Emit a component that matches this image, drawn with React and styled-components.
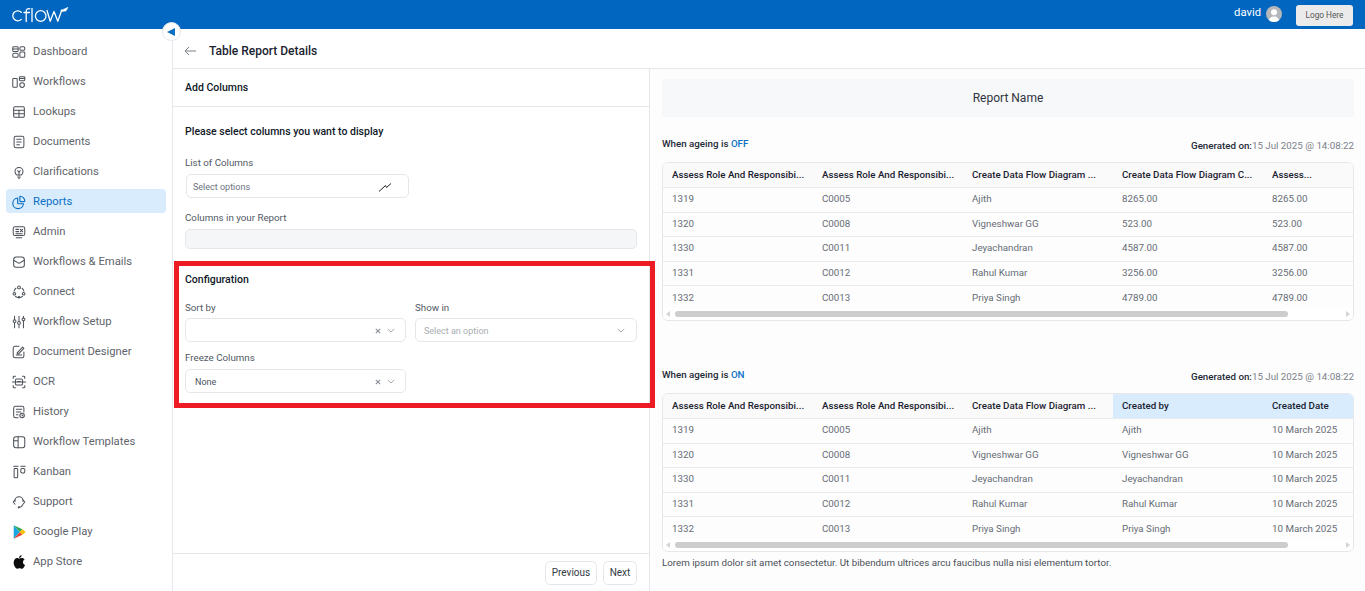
import React from 'react';
import styled, { createGlobalStyle } from 'styled-components';

const Global = createGlobalStyle`
  html, body { margin: 0; padding: 0; height: 100%; background: #fff; overflow: hidden; }
  body { font-family: Roboto, "Liberation Sans", sans-serif; color: #111827; }
  * { box-sizing: border-box; }
`;

const Page = styled.div`
  width: 1365px; height: 591px; display: flex; flex-direction: column; overflow: hidden; position: relative;
`;
const Header = styled.header`
  height: 29px; flex: none; background: #0066bf; display: flex; align-items: center; justify-content: space-between;
  padding: 0 12px 0 12px;
`;
const HeaderRight = styled.div`display: flex; align-items: center;`;
const UserName = styled.span`color: #fff; font-size: 11.25px; margin-right: 5px; margin-bottom: 4px;`;
const Avatar = styled.span`
  width: 16px; height: 16px; border-radius: 50%; background: #b4b7bb; display: flex; overflow: hidden; margin-right: 14px; margin-bottom: 1px;
`;
const LogoBtn = styled.button`
  width: 57px; height: 21px; border: 0; border-radius: 3px; background: #ebebeb; color: #555; font: 400 8.25px Roboto, sans-serif; padding: 0; margin-top: 1px;
`;
const Body = styled.div`flex: 1; display: flex; min-height: 0;`;
const Sidebar = styled.nav`
  width: 173px; flex: none; border-right: 1px solid #e5e7eb; padding: 10px 6px 0; display: flex; flex-direction: column; gap: 6px;
`;
const NavItem = styled.div`
  height: 24px; width: 160px; display: flex; align-items: center; gap: 6px; padding: 1px 0 0 5px; border-radius: 4px;
  background: ${p => (p.$active ? '#d8ecfd' : 'transparent')};
  color: ${p => (p.$active ? '#0b6fc4' : '#5f646b')};
  font-size: 11.25px;
  svg { flex: none; }
`;
const Collapse = styled.button`
  position: absolute; left: 162px; top: 22px; width: 19px; height: 19px; border-radius: 50%; border: 1px solid #e3e8ee; background: #fff;
  padding: 0; display: flex; align-items: center; justify-content: center;
`;
const Tri = styled.span`
  width: 0; height: 0; border-style: solid; border-width: 4.5px 8px 4.5px 0; border-color: transparent #0b6fc4 transparent transparent; margin-left: -1px;
`;
const Main = styled.main`flex: 1; display: flex; flex-direction: column; min-width: 0;`;
const TitleBar = styled.div`
  height: 40px; flex: none; border-bottom: 1px solid #e5e7eb; display: flex; align-items: center; padding: 5px 0 0 11px; gap: 13px;
`;
const Title = styled.h1`margin: 0; font-size: 12px; font-weight: 500; color: #1a2230;`;
const Split = styled.div`flex: 1; display: flex; min-height: 0;`;
const LeftPane = styled.section`
  width: 477px; flex: none; border-right: 1px solid #e5e7eb; display: flex; flex-direction: column;
`;
const PaneHead = styled.div`
  height: 38px; flex: none; border-bottom: 1px solid #e5e7eb; padding: 0 12px; display: flex; align-items: center;
  font-size: 10.5px; font-weight: 500; color: #101828;
`;
const PaneBody = styled.div`flex: 1; padding: 18px 12px 0; display: flex; flex-direction: column;`;
const Heading = styled.h2`margin: 0; font-size: 10.5px; line-height: 14px; font-weight: 500; color: #101828;`;
const Label = styled.label`display: block; font-size: 9.75px; line-height: 13px; color: #515863; margin-bottom: ${p => p.$mb}px; margin-top: ${p => p.$mt ?? 0}px;`;
const SelectBox = styled.div`
  height: 24px; width: ${p => p.$w || '100%'}; margin-left: ${p => p.$ml || 0}px; border: 1px solid #e5e7eb; border-radius: 5px; background: #fff; display: flex; align-items: center;
  padding: 1px ${p => p.$pr ?? 9}px 0 ${p => p.$pl ?? 9}px; font-size: 9px; color: ${p => p.$color || '#6b7280'};
`;
const SelectText = styled.span`flex: 1;`;
const EmptyBox = styled.div`height: 20px; border: 1px solid #e5e7eb; border-radius: 5px; background: #f5f6f8;`;
const Config = styled.div`position: relative; margin-top: 24px;`;
const Outline = styled.div`
  position: absolute; left: -11px; top: -12px; width: 481px; height: 147px; border: 5px solid #ed1c24; pointer-events: none;
`;
const TwoCols = styled.div`display: grid; grid-template-columns: 221px 222px; column-gap: 9px; margin-top: ${p => p.$mt}px;`;
const Field = styled.div``;
const Actions = styled.span`display: flex; align-items: center; gap: 6px;`;
const Footer = styled.div`
  height: 38px; flex: none; border-top: 1px solid #e5e7eb; display: flex; justify-content: flex-end; align-items: center; gap: 6px; padding: 0 12px 0 0;
`;
const Btn = styled.button`
  height: 24px; width: ${p => p.$w}px; border: 1px solid #e5e7eb; border-radius: 5px; background: #fff; color: #333a45;
  font: 400 10px Roboto, sans-serif; padding: 0;
`;
const RightPane = styled.section`flex: 1; min-width: 0; background: #fdfdfd; padding: 10px 11px 0 12px; display: flex; flex-direction: column;`;
const ReportName = styled.div`
  height: 38px; flex: none; background: #f7f8fa; display: flex; align-items: center; justify-content: center; font-size: 12px; color: #2f3540;
`;
const MetaRow = styled.div`
  display: flex; justify-content: space-between; align-items: center; height: 14px; margin-top: ${p => p.$mt}px; font-size: 9.75px; margin-bottom: 11px;
`;
const Ageing = styled.span`font-weight: 500; color: #1f2937; margin-top: -2px;`;
const Blue = styled.span`color: #0b6fc4;`;
const Gen = styled.span`color: #7a8089; margin-top: 2px;`;
const GenLabel = styled.b`font-weight: 500; color: #1f2937;`;
const TableWrap = styled.div`
  width: 692px; height: 159px; flex: none; border: 1px solid #e5e7eb; border-radius: 6px; overflow: hidden; display: flex; flex-direction: column;
`;
const Grid = styled.div`
  flex: 1; overflow: hidden; display: grid; grid-template-columns: repeat(5, 150px); grid-auto-rows: min-content;
`;
const Th = styled.div`
  height: 25px; padding: 0 9px 1px; display: flex; align-items: center; font-size: 9.75px; font-weight: 500; color: #1a2230; white-space: nowrap;
  background: ${p => (p.$hl ? '#d8ecfd' : '#fafafa')}; border-bottom: 1px solid #e8eaed;
`;
const Td = styled.div`
  height: ${p => p.$h}px; padding: 0 9px ${p => (p.$last ? 0 : 3)}px; display: flex; align-items: center; font-size: 9.75px; color: #666c75; white-space: nowrap;
  border-bottom: ${p => (p.$last ? 'none' : '1px solid #e8eaed')};
`;
const Scroll = styled.div`height: 12px; flex: none; display: flex; align-items: center; padding: 0 3px; gap: 5px; background: #fff;`;
const Arrow = styled.span`
  width: 0; height: 0; border-style: solid; flex: none;
  border-width: 3px ${p => (p.$right ? 0 : '4px')} 3px ${p => (p.$right ? '4px' : 0)};
  border-color: transparent ${p => (p.$right ? 'transparent' : '#d4d4d4')} transparent ${p => (p.$right ? '#d4d4d4' : 'transparent')};
`;
const Track = styled.div`flex: 1; height: 6px;`;
const Thumb = styled.div`width: 92%; height: 6px; border-radius: 3px; background: #cdcdcd;`;
const Note = styled.p`margin: 4px 0 0; font-size: 9.75px; line-height: 13px; color: #4a4f57;`;

const I = ({ children, c = '#4b5058', sw = 1.15 }) => (
  <svg width="16" height="16" viewBox="0 0 18 18" fill="none" stroke={c} strokeWidth={sw} strokeLinecap="round" strokeLinejoin="round">{children}</svg>
);

const icons = {
  Dashboard: <I><rect x="2" y="3" width="6" height="5.5" rx="1"/><rect x="10" y="3" width="5.5" height="4" rx="1.5"/><rect x="2" y="10.5" width="6" height="4.5" rx="1.5"/><rect x="10" y="9" width="5.5" height="6" rx="1"/><path d="M2 5.5h6"/></I>,
  Workflows: <I><rect x="2" y="5" width="5" height="10" rx="1"/><rect x="9.5" y="3" width="6" height="4.5" rx="1"/><path d="M9.5 5h6"/><circle cx="12.5" cy="12.5" r="2.6"/></I>,
  Lookups: <I><rect x="3" y="3" width="12" height="12" rx="1.5"/><path d="M3 7h12M3 11h12M9 7v8"/></I>,
  Documents: <I><rect x="3.5" y="2.5" width="11" height="13" rx="2"/><path d="M6.5 6h5M6.5 9h5M6.5 12h3"/></I>,
  Clarifications: <I><path d="M6.5 12.5C5 11.5 4.5 10 4.5 8.5a4.5 4.5 0 0 1 9 0c0 1.5-.5 3-2 4z"/><path d="M7.5 14.5h3M8.5 16h1M7.5 7.5L9 9.5l1.5-2M9 9.5v3"/></I>,
  Reports: <I c="#0b6fc4" sw={1.3}><path d="M7.5 4.5a6 6 0 1 0 6.5 6.5H8a.5.5 0 0 1-.5-.5z"/><path d="M10 2.5a5.5 5.5 0 0 1 5.5 5.5 .5.5 0 0 1-.5.5H10.5a.5.5 0 0 1-.5-.5z"/></I>,
  Admin: <I><rect x="2.5" y="3" width="13" height="10" rx="2"/><path d="M6 15.5h6M5.5 6h3M5.5 8.5h3M5.5 11h7M10.5 8.5l2.5-2.5M10.5 6l2.5 2.5" strokeWidth="1.3"/></I>,
  'Workflows & Emails': <I><path d="M3 6.5c0-2 1-3 3-3h6c2 0 3 1 3 3v6c0 1.5-1 2.5-2.5 2.5h-7C4 15 3 14 3 12.5z"/><path d="M3 7l6 3.500L15 7"/></I>,
  Connect: <I><circle cx="9" cy="3.8" r="1.6"/><circle cx="3.8" cy="11" r="1.5"/><circle cx="14.2" cy="11" r="1.5"/><circle cx="9" cy="14.8" r=".8"/><path d="M5.5 4.8C4.5 5.5 4 6.5 3.5 8M12.5 4.8c1 .7 1.5 1.7 2 3.2M5 14c.8.7 1.5 1 2.5 1.2M13 14c-.8.7-1.5 1-2.5 1.2"/></I>,
  'Workflow Setup': <I><path d="M4 2.5v4M4 10v5.5M9 2.5v6M9 12v3.5M14 2.5v2M14 8v7.500"/><circle cx="4" cy="8" r="1.6"/><circle cx="9" cy="10" r="1.6"/><circle cx="14" cy="6" r="1.6"/></I>,
  'Document Designer': <I><path d="M14.5 9v4.500a2 2 0 0 1-2 2h-8a2 2 0 0 1-2-2v-9a2 2 0 0 1 2-2H9"/><path d="M6 12.5h6M7 10l6-6.500 1.500 1.500-6 6H7z"/></I>,
  OCR: <I><path d="M2.5 5V3.500a1 1 0 0 1 1-1H5M13 2.500h1.500a1 1 0 0 1 1 1V5M2.5 13v1.500a1 1 0 0 0 1 1H5M13 15.500h1.500a1 1 0 0 0 1-1V13M1.5 9h15"/><rect x="5" y="5.5" width="8" height="7" rx="1.5"/><path d="M7.5 8.5h3"/></I>,
  History: <I><path d="M8 15.5H5a2 2 0 0 1-2-2v-9a2 2 0 0 1 2-2h7.500a2 2 0 0 1 2 2V9"/><path d="M6 6h6M6 9h5M6 12h2"/><circle cx="12.5" cy="13" r="2.5"/><path d="M12.5 12v1.200h1"/></I>,
  'Workflow Templates': <I><rect x="3" y="3" width="12.5" height="12.5" rx="2.5"/><path d="M3 7.5h5M8 3v12.500"/></I>,
  Kanban: <I><path d="M3 2.5h5M11 2.5h5"/><rect x="3.5" y="5" width="4" height="10.5" rx="1"/><rect x="11" y="5" width="4.5" height="5" rx="1.5"/></I>,
  Support: <I><path d="M4.5 8.5V7.500a4.500 4.500 0 0 1 9 0v1"/><path d="M4.5 6.5L2.500 9l2 2.500M13.5 6.5l2 2.500-2 2.500"/><path d="M13 12c-.5 2-2 3-3.500 3"/><circle cx="8.8" cy="15" r=".7"/></I>,
  'Google Play': (
    <svg width="16" height="16" viewBox="0 0 18 18">
      <path d="M3 1.5v15L10 9z" fill="#1aa6e0"/>
      <path d="M3 1.5L10 9l2.800-3z" fill="#34a853"/>
      <path d="M3 16.5L10 9l2.800 3z" fill="#ea4335"/>
      <path d="M12.8 6L10 9l2.800 3 3.700-3z" fill="#fbbc04"/>
    </svg>
  ),
  'App Store': (
    <svg width="16" height="16" viewBox="0 0 18 18" fill="#0c0c0c">
      <path d="M9.2 5.2c.8 0 1.8-.8 3-.8 1.2 0 2.4.6 3.100 1.700-2.600 1.500-2.200 5.100.5 6.200-.7 1.900-2.100 4.200-3.500 4.200-1 0-1.500-.6-2.700-.6-1.200 0-1.800.6-2.700.6C5.200 16.500 3 12.800 3 9.900c0-3 2-5.300 4-5.300 1 0 1.500.6 2.200.6z"/>
      <path d="M9 4.4c0-1.500 1.200-3 3-3.300.1 1.700-1.300 3.300-3 3.300z"/>
    </svg>
  ),
};

const navItems = Object.keys(icons);

const Logo = () => (
  <svg width="58" height="19" viewBox="0 0 58 19" fill="none" stroke="#fff" strokeWidth="1.3" strokeLinecap="round" strokeLinejoin="round">
    <path d="M9.3 7.2A5 5 0 1 0 9.300 14.400"/>
    <path d="M17.8 3.800c-2-.6-3.600 0-3.600 3V16.500M12 7.500h5.500"/>
    <path d="M20 3.500V16.500"/>
    <circle cx="28.700" cy="11" r="5.300"/>
    <path d="M35 5.500l3.200 10.800 3.800-9.800 3.800 9.800 4-11.300"/>
    <path d="M49 5.500L56 2.300L54 6L50 6.500z" fill="#fff" strokeWidth=".5"/>
  </svg>
);

const Cross = () => (
  <svg width="6" height="6" viewBox="0 0 6 6" stroke="#8b9098" strokeWidth="1.1"><path d="M.8.8l4.400 4.400M5.200.8L.8 5.200"/></svg>
);
const Chev = () => (
  <svg width="8" height="5" viewBox="0 0 8 5" fill="none" stroke="#a4a8ae" strokeWidth="1"><path d="M.8 1l3.200 3 3.200-3"/></svg>
);

const rows = [
  ['1319', 'C0005', 'Ajith', '8265.00'],
  ['1320', 'C0008', 'Vigneshwar GG', '523.00'],
  ['1330', 'C0011', 'Jeyachandran', '4587.00'],
  ['1331', 'C0012', 'Rahul Kumar', '3256.00'],
  ['1332', 'C0013', 'Priya Singh', '4789.00'],
];
const heights = [25, 24, 25, 24, 22];

const ReportTable = ({ heads, hl, cell }) => (
  <TableWrap>
    <Grid>
      {heads.map((h, i) => <Th key={i} $hl={hl && i >= 3}>{h}</Th>)}
      {rows.map((r, ri) => [0, 1, 2, 3, 4].map(ci => (
        <Td key={`${ri}-${ci}`} $h={heights[ri]} $last={ri === 4}>{cell(r, ci)}</Td>
      )))}
    </Grid>
    <Scroll>
      <Arrow />
      <Track><Thumb /></Track>
      <Arrow $right />
    </Scroll>
  </TableWrap>
);

const base = ['Assess Role And Responsibi...', 'Assess Role And Responsibi...', 'Create Data Flow Diagram ...'];

export default function App() {
  return (
    <Page>
      <Global />
      <Header>
        <Logo />
        <HeaderRight>
          <UserName>david</UserName>
          <Avatar>
            <svg width="16" height="16" viewBox="0 0 16 16" fill="#fff"><circle cx="8" cy="6.2" r="3"/><path d="M2.8 16c0-3.600 2.300-5.500 5.200-5.500s5.200 1.900 5.200 5.500z"/></svg>
          </Avatar>
          <LogoBtn>Logo Here</LogoBtn>
        </HeaderRight>
      </Header>
      <Body>
        <Sidebar>
          {navItems.map(n => (
            <NavItem key={n} $active={n === 'Reports'}>{icons[n]}<span>{n}</span></NavItem>
          ))}
        </Sidebar>
        <Main>
          <TitleBar>
            <svg width="12" height="10" viewBox="0 0 12 10" fill="none" stroke="#7b8087" strokeWidth="1"><path d="M12 5H1M5 1L1 5l4 4"/></svg>
            <Title>Table Report Details</Title>
          </TitleBar>
          <Split>
            <LeftPane>
              <PaneHead>Add Columns</PaneHead>
              <PaneBody>
                <Heading>Please select columns you want to display</Heading>
                <Label $mt={17} $mb={5}>List of Columns</Label>
                <SelectBox $w="223px" $ml={1} $pl={6} $pr={16}>
                  <SelectText>Select options</SelectText>
                  <svg width="14" height="10" viewBox="0 0 14 10" fill="none" stroke="#222" strokeWidth="1"><path d="M1 9.500L7.500 3.500 8.500 5.500 13 1.500"/></svg>
                </SelectBox>
                <Label $mt={13} $mb={5}>Columns in your Report</Label>
                <EmptyBox />
                <Config>
                  <Outline />
                  <Heading>Configuration</Heading>
                  <TwoCols $mt={14}>
                    <Field>
                      <Label $mb={4}>Sort by</Label>
                      <SelectBox $pr={10}>
                        <SelectText />
                        <Actions><Cross /><Chev /></Actions>
                      </SelectBox>
                    </Field>
                    <Field>
                      <Label $mb={4}>Show in</Label>
                      <SelectBox $color="#a9adb3" $pl={8} $pr={11}>
                        <SelectText>Select an option</SelectText>
                        <Chev />
                      </SelectBox>
                    </Field>
                  </TwoCols>
                  <TwoCols $mt={9}>
                    <Field>
                      <Label $mb={5}>Freeze Columns</Label>
                      <SelectBox $color="#4b5360" $pr={10}>
                        <SelectText>None</SelectText>
                        <Actions><Cross /><Chev /></Actions>
                      </SelectBox>
                    </Field>
                  </TwoCols>
                </Config>
              </PaneBody>
              <Footer>
                <Btn $w={52}>Previous</Btn>
                <Btn $w={34}>Next</Btn>
              </Footer>
            </LeftPane>
            <RightPane>
              <ReportName>Report Name</ReportName>
              <MetaRow $mt={20}>
                <Ageing>When ageing is <Blue>OFF</Blue></Ageing>
                <Gen><GenLabel>Generated on:</GenLabel>15 Jul 2025 @ 14:08:22</Gen>
              </MetaRow>
              <ReportTable
                heads={[...base, 'Create Data Flow Diagram C...', 'Assess...']}
                cell={(r, c) => (c === 4 ? r[3] : r[c])}
              />
              <MetaRow $mt={47}>
                <Ageing>When ageing is <Blue>ON</Blue></Ageing>
                <Gen><GenLabel>Generated on:</GenLabel>15 Jul 2025 @ 14:08:22</Gen>
              </MetaRow>
              <ReportTable
                heads={[...base, 'Created by', 'Created Date']}
                hl
                cell={(r, c) => (c === 3 ? r[2] : c === 4 ? '10 March 2025' : r[c])}
              />
              <Note>Lorem ipsum dolor sit amet consectetur. Ut bibendum ultrices arcu faucibus nulla nisi elementum tortor.</Note>
            </RightPane>
          </Split>
        </Main>
      </Body>
      <Collapse><Tri /></Collapse>
    </Page>
  );
}
